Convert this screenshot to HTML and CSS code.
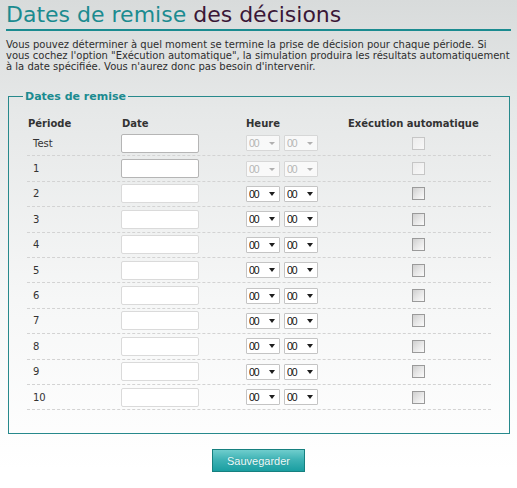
FILE: index.html
```html
<!DOCTYPE html>
<html lang="fr">
<head>
<meta charset="utf-8">
<title>Dates de remise des décisions</title>
<link rel="stylesheet" href="styles.css">
</head>
<body>
<div class="page">
  <h1 class="title"><span class="title-a">Dates de remise</span> <span class="title-b">des décisions</span></h1>
  <p class="intro">Vous pouvez déterminer à quel moment se termine la prise de décision pour chaque période. Si<br>vous cochez l'option "Exécution automatique", la simulation produira les résultats automatiquement<br>à la date spécifiée. Vous n'aurez donc pas besoin d'intervenir.</p>

  <fieldset class="box">
    <legend class="box-legend">Dates de remise</legend>
    <div class="grid">
      <div class="row head">
        <div class="c-per">Période</div>
        <div class="c-date">Date</div>
        <div class="c-hour">Heure</div>
        <div class="c-auto">Exécution automatique</div>
      </div>

      <div class="row">
        <div class="c-per cell">Test</div>
        <div class="c-date"><input class="date strong" type="text"></div>
        <div class="c-hour"><span class="sel off"><select disabled><option>00</option></select></span><span class="sel off"><select disabled><option>00</option></select></span></div>
        <div class="c-auto"><input class="chk" type="checkbox" disabled></div>
      </div>
      <div class="row">
        <div class="c-per cell">1</div>
        <div class="c-date"><input class="date strong" type="text"></div>
        <div class="c-hour"><span class="sel off"><select disabled><option>00</option></select></span><span class="sel off"><select disabled><option>00</option></select></span></div>
        <div class="c-auto"><input class="chk" type="checkbox" disabled></div>
      </div>
      <div class="row">
        <div class="c-per cell">2</div>
        <div class="c-date"><input class="date" type="text"></div>
        <div class="c-hour"><span class="sel"><select><option>00</option></select></span><span class="sel"><select><option>00</option></select></span></div>
        <div class="c-auto"><input class="chk" type="checkbox"></div>
      </div>
      <div class="row">
        <div class="c-per cell">3</div>
        <div class="c-date"><input class="date" type="text"></div>
        <div class="c-hour"><span class="sel"><select><option>00</option></select></span><span class="sel"><select><option>00</option></select></span></div>
        <div class="c-auto"><input class="chk" type="checkbox"></div>
      </div>
      <div class="row">
        <div class="c-per cell">4</div>
        <div class="c-date"><input class="date" type="text"></div>
        <div class="c-hour"><span class="sel"><select><option>00</option></select></span><span class="sel"><select><option>00</option></select></span></div>
        <div class="c-auto"><input class="chk" type="checkbox"></div>
      </div>
      <div class="row">
        <div class="c-per cell">5</div>
        <div class="c-date"><input class="date" type="text"></div>
        <div class="c-hour"><span class="sel"><select><option>00</option></select></span><span class="sel"><select><option>00</option></select></span></div>
        <div class="c-auto"><input class="chk" type="checkbox"></div>
      </div>
      <div class="row">
        <div class="c-per cell">6</div>
        <div class="c-date"><input class="date" type="text"></div>
        <div class="c-hour"><span class="sel"><select><option>00</option></select></span><span class="sel"><select><option>00</option></select></span></div>
        <div class="c-auto"><input class="chk" type="checkbox"></div>
      </div>
      <div class="row">
        <div class="c-per cell">7</div>
        <div class="c-date"><input class="date" type="text"></div>
        <div class="c-hour"><span class="sel"><select><option>00</option></select></span><span class="sel"><select><option>00</option></select></span></div>
        <div class="c-auto"><input class="chk" type="checkbox"></div>
      </div>
      <div class="row">
        <div class="c-per cell">8</div>
        <div class="c-date"><input class="date" type="text"></div>
        <div class="c-hour"><span class="sel"><select><option>00</option></select></span><span class="sel"><select><option>00</option></select></span></div>
        <div class="c-auto"><input class="chk" type="checkbox"></div>
      </div>
      <div class="row">
        <div class="c-per cell">9</div>
        <div class="c-date"><input class="date" type="text"></div>
        <div class="c-hour"><span class="sel"><select><option>00</option></select></span><span class="sel"><select><option>00</option></select></span></div>
        <div class="c-auto"><input class="chk" type="checkbox"></div>
      </div>
      <div class="row">
        <div class="c-per cell">10</div>
        <div class="c-date"><input class="date" type="text"></div>
        <div class="c-hour"><span class="sel"><select><option>00</option></select></span><span class="sel"><select><option>00</option></select></span></div>
        <div class="c-auto"><input class="chk" type="checkbox"></div>
      </div>
    </div>
  </fieldset>

  <div class="actions">
    <button class="save" type="button">Sauvegarder</button>
  </div>
</div>
</body>
</html>
```

FILE: styles.css
```css
html, body {
  margin: 0;
  padding: 0;
}

body {
  min-height: 488px;
  background: linear-gradient(to bottom, #d8dbdb 0, #e6e8e8 110px, #f6f7f7 300px, #ffffff 470px);
  font-family: "DejaVu Sans", Verdana, sans-serif;
  color: #333333;
}

.page {
  padding: 0 6px 0 6px;
}

.title {
  margin: 0;
  padding-top: 1px;
  font-size: 22px;
  line-height: 28px;
  font-weight: normal;
  border-bottom: 2px solid #1b8b90;
}

.title-a {
  color: #1b8b90;
}

.title-b {
  color: #3a1737;
}

.intro {
  margin: 8px 0 18px 0;
  font-size: 10px;
  line-height: 11px;
  color: #2e2e2e;
  white-space: nowrap;
}

.box {
  margin: 0 1px 0 2px;
  padding: 13px 18px 23px 18px;
  border: 1px solid #27898c;
}

.box-legend {
  margin-left: -4px;
  padding: 0 2px;
  font-size: 11px;
  line-height: 13px;
  font-weight: bold;
  color: #1b8b90;
}

.grid {
  display: flex;
  flex-direction: column;
}

.row {
  display: grid;
  grid-template-columns: 94px 125px 102px 141px;
  align-items: center;
  box-sizing: border-box;
  height: 25.4px;
  border-bottom: 1px dashed #d3d3d3;
  font-size: 10px;
  color: #333333;
}

.row.head {
  height: 15px;
  border-bottom: 0;
  font-weight: bold;
  line-height: 15px;
  color: #333333;
}

.head .c-per {
  padding-left: 1px;
}

.head .c-date {
  padding-left: 1px;
}

.cell {
  padding-left: 6px;
}

.c-hour {
  display: flex;
  gap: 4px;
}

.date {
  display: block;
  box-sizing: border-box;
  width: 78px;
  height: 19px;
  margin: 0;
  padding: 0 3px;
  border: 1px solid #dadada;
  border-radius: 2px;
  background: #ffffff;
  font-size: 10px;
}

.date.strong {
  border-color: #b5b5b5;
}

.sel {
  position: relative;
  display: block;
  width: 34px;
  height: 16px;
}

.sel select {
  -webkit-appearance: none;
  appearance: none;
  box-sizing: border-box;
  display: block;
  width: 34px;
  height: 16px;
  margin: 0;
  padding: 0 0 0 2px;
  border: 1px solid #c4c4c4;
  border-radius: 1px;
  background: #ffffff;
  font-family: "Liberation Sans", Arial, sans-serif;
  font-size: 10.5px;
  letter-spacing: -1px;
  line-height: 14px;
  color: #111111;
}

.sel::after {
  content: "";
  position: absolute;
  right: 5px;
  top: 6px;
  border-left: 3px solid transparent;
  border-right: 3px solid transparent;
  border-top: 4px solid #1e1e1e;
  pointer-events: none;
}

.sel.off select {
  color: #a0a0a0;
  border-color: #cfcfcf;
}

.sel.off::after {
  border-top: 3px solid #b0b0b0;
  top: 7px;
}

.chk {
  -webkit-appearance: none;
  appearance: none;
  display: block;
  box-sizing: border-box;
  width: 13px;
  height: 13px;
  margin: 0 0 0 64px;
  border: 1px solid #9a9a9a;
  border-radius: 0;
  background: linear-gradient(135deg, #cfcfcf 0%, #e9e9e9 55%, #fbfbfb 100%);
}

.chk:disabled {
  border-color: #c6c6c6;
  background: linear-gradient(135deg, #ececec 0%, #f8f8f8 100%);
}

.actions {
  display: flex;
  justify-content: center;
  margin-top: 15px;
}

.save {
  box-sizing: border-box;
  width: 93px;
  height: 23px;
  margin: 0;
  padding: 0;
  border: 1px solid #16807f;
  border-radius: 0;
  background: linear-gradient(to bottom, #6fcdcd 0%, #3fb3b5 45%, #1a9ea1 100%);
  font-family: "Liberation Sans", Arial, sans-serif;
  font-size: 11px;
  color: #eefcfc;
  text-shadow: 0 0 1px rgba(0, 80, 80, 0.4);
}
```
